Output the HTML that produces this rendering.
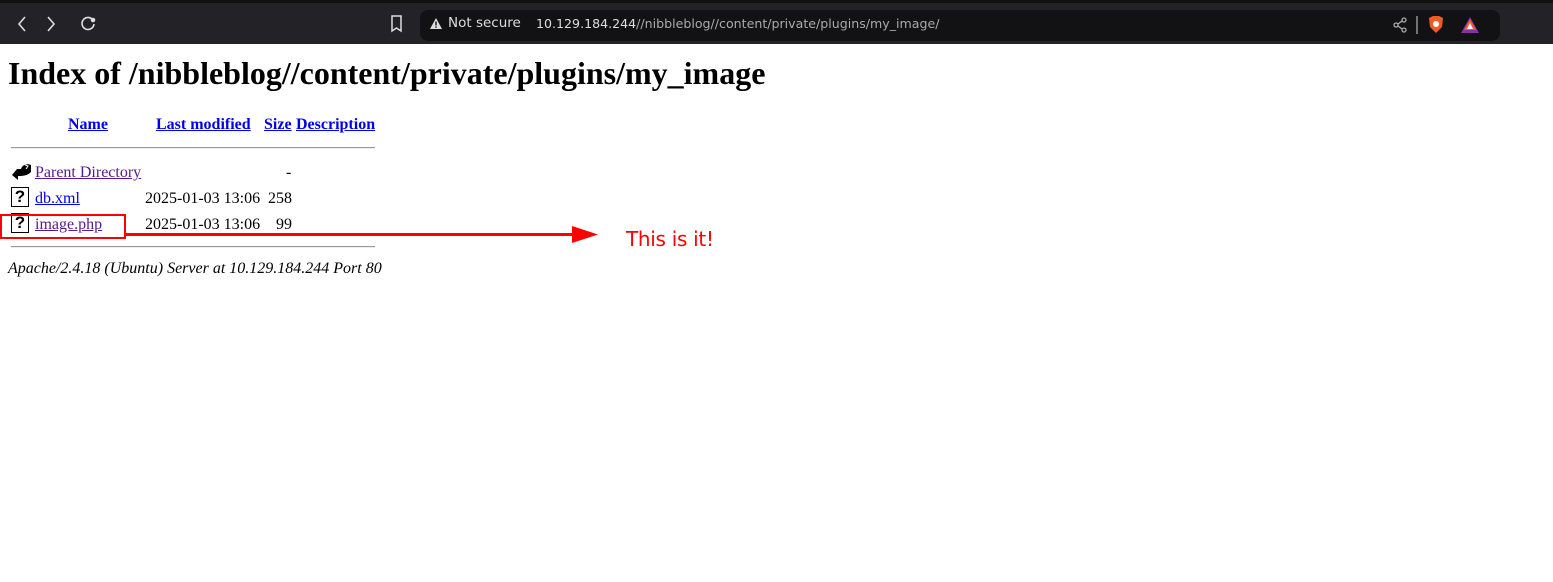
<!DOCTYPE html>
<html><head><style>
body{margin:0;width:1553px;height:582px;background:#fff;position:relative;overflow:hidden;font-family:"Liberation Serif",serif;}
.bar{position:absolute;left:0;top:0;width:1553px;height:44px;background:#232327;border-top:3px solid #111113;box-sizing:border-box}
.pill{position:absolute;left:420px;top:7px;width:1080px;height:31px;background:#121214;border-radius:8px}
.t{position:absolute;color:#ddd;font-family:"DejaVu Sans",sans-serif;font-size:13.5px}
h1{position:absolute;left:8px;top:55px;margin:0;font-size:32px;font-weight:bold}
a{color:#0000ee}
a.v{color:#551a8b}
.p{position:absolute;font-size:16px;white-space:nowrap}
.hr{position:absolute;left:11px;width:364px;height:0;border-top:1px solid #999;border-bottom:1px solid #eee}
.ic{position:absolute;left:11px;width:18px;height:20px;border:1.5px solid #000;box-sizing:border-box;background:#fff;font:bold 17px "Liberation Sans",sans-serif;text-align:center;line-height:18px}
</style></head><body>
<div class="bar">
<svg style="position:absolute;left:14px;top:10px" width="90" height="22" fill="none" stroke="#ddd" stroke-width="1.6"><path d="M11 4l-6 7 6 7"/><path d="M34 4l6 7-6 7"/><path d="M78 6a6 6 0 1 0 2 5"/><circle cx="79" cy="7" r="1.5" fill="#ddd"/></svg>
<svg style="position:absolute;left:390px;top:12px" width="14" height="18" fill="none" stroke="#ddd" stroke-width="1.5"><path d="M2 1h9v15l-4.5-3-4.5 3z"/></svg>
<div class="pill"></div>
<svg style="position:absolute;left:429px;top:14px" width="14" height="13"><path d="M7 1l6 11H1z" fill="#ddd"/><rect x="6.3" y="4.5" width="1.4" height="4" fill="#121214"/><rect x="6.3" y="9.3" width="1.4" height="1.4" fill="#121214"/></svg>
<div class="t" style="left:448px;top:12px">Not secure</div>
<div class="t" style="left:536px;top:13px;font-size:12.6px">10.129.184.244<span style="color:#aaa">//nibbleblog//content/private/plugins/my_image/</span></div>
<svg style="position:absolute;left:1392px;top:12px" width="40" height="20" fill="none" stroke="#aaa" stroke-width="1.3"><circle cx="4" cy="10" r="2"/><circle cx="12" cy="5" r="2"/><circle cx="12" cy="15" r="2"/><path d="M6 9l4-3M6 11l4 3"/><path d="M25 1v18"/></svg>
<svg style="position:absolute;left:1427px;top:12px" width="18" height="20"><path d="M2 3l4-2h6l4 2-1 9-6 6-6-6z" fill="#f15a22"/><circle cx="9" cy="9" r="3" fill="#fff"/></svg>
<svg style="position:absolute;left:1460px;top:13px" width="20" height="18"><path d="M10 1l9 16H1z" fill="#8b2fa0"/><path d="M10 3l6 11H4z" fill="#f25c2c"/><path d="M10 7l3 6H7z" fill="#fff"/></svg>
</div>
<h1>Index of /nibbleblog//content/private/plugins/my_image</h1>
<div class="p" style="left:68px;top:116px;font-weight:bold"><a href="#">Name</a></div>
<div class="p" style="left:156px;top:116px;font-weight:bold"><a href="#">Last modified</a></div>
<div class="p" style="left:264px;top:116px;font-weight:bold"><a href="#">Size</a></div>
<div class="p" style="left:296px;top:116px;font-weight:bold"><a href="#">Description</a></div>
<div class="hr" style="top:147px"></div>
<svg style="position:absolute;left:11px;top:162px" width="22" height="20"><path d="M20 3c-4-2-9 0-10 4H6l-5 6 6 5v-4c4 0 9 0 13-4z" fill="#000"/><path d="M14 3l3 1-2 3" stroke="#fff" fill="none"/></svg>
<div class="p" style="left:35px;top:164px"><a class="v" href="#">Parent Directory</a></div>
<div class="p" style="left:286px;top:164px">-</div>
<div class="ic" style="top:187px">?</div>
<div class="p" style="left:35px;top:190px"><a href="#">db.xml</a></div>
<div class="p" style="left:145px;top:190px">2025-01-03 13:06</div>
<div class="p" style="left:268px;top:190px">258</div>
<div class="ic" style="top:213px">?</div>
<div class="p" style="left:35px;top:216px"><a class="v" href="#">image.php</a></div>
<div class="p" style="left:145px;top:216px">2025-01-03 13:06</div>
<div class="p" style="left:276px;top:216px">99</div>
<div class="hr" style="top:246px"></div>
<div class="p" style="left:8px;top:260px;font-style:italic">Apache/2.4.18 (Ubuntu) Server at 10.129.184.244 Port 80</div>
<div style="position:absolute;left:0;top:214px;width:126px;height:25px;border:2.5px solid #f00;box-sizing:border-box"></div>
<div style="position:absolute;left:126px;top:233px;width:450px;height:3px;background:#f00"></div>
<svg style="position:absolute;left:572px;top:226px" width="28" height="17"><path d="M0 0l26 8.5L0 17z" fill="#f00"/></svg>
<div style="position:absolute;left:626px;top:227px;color:#f00;font:20px 'DejaVu Sans',sans-serif;letter-spacing:-0.3px">This is it!</div>
</body></html>
